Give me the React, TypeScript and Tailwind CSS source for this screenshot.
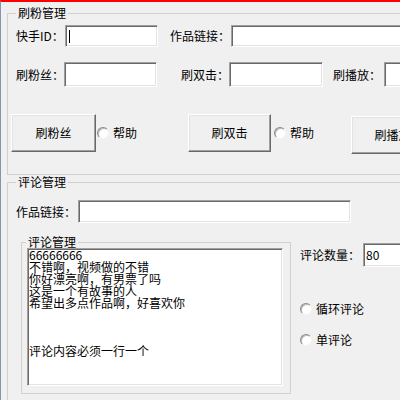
import React from "react";

const sunken =
  "bg-white border border-t-[#a0a0a0] border-l-[#a0a0a0] border-b-white border-r-white shadow-[inset_1px_1px_0_#696969,inset_-1px_-1px_0_#e3e3e3]";

const raised =
  "bg-[#f0f0f0] border border-t-white border-l-white border-b-[#696969] border-r-[#696969] shadow-[inset_-1px_-1px_0_#a0a0a0,inset_1px_1px_0_#e3e3e3] flex items-center justify-center";

const TextBox = ({
  className,
  children,
}: {
  className: string;
  children?: React.ReactNode;
}) => <div className={`${sunken} ${className} flex items-center shrink-0`}>{children}</div>;

const Radio = ({ label, className = "" }: { label: string; className?: string }) => (
  <div className={`flex items-center h-[14px] ${className}`}>
    <div className="w-[12px] h-[12px] rounded-full bg-white border border-t-[#8a8a8a] border-l-[#8a8a8a] border-b-[#f4f4f4] border-r-[#f4f4f4] shadow-[inset_1px_1px_0_#b8b8b8]" />
    <span className="ml-[4px] leading-[14px]">{label}</span>
  </div>
);

const comments = [
  "66666666",
  "不错啊，视频做的不错",
  "你好漂亮啊，有男票了吗",
  "这是一个有故事的人",
  "希望出多点作品啊，好喜欢你",
  "",
  "",
  "",
  "评论内容必须一行一个",
].join("\n");

export default function App() {
  return (
    <div className="w-[400px] h-[400px] overflow-hidden bg-[#f0f0f0] border-t-2 border-t-[#ff0000] border-l border-l-[#8595b0] text-[12px] text-black font-['Liberation_Sans_Narrow','Noto_Sans_CJK_SC',sans-serif]">
      {/* 刷粉管理 */}
      <fieldset className="mt-[4px] ml-[6px] w-[420px] border border-[#d0d0d0] pb-[20px]">
        <legend className="ml-[8px] px-[2px] leading-[14px]">刷粉管理</legend>

        <div className="flex items-center mt-[5px] pl-[8px]">
          <span className="w-[49px] shrink-0">快手ID：</span>
          <TextBox className="w-[93px] h-[22px]">
            <div className="ml-[3px] w-px h-[13px] bg-black" />
          </TextBox>
          <span className="ml-[12px] w-[61px] shrink-0">作品链接：</span>
          <TextBox className="w-[200px] h-[22px]" />
        </div>

        <div className="flex items-center mt-[15px] pl-[8px]">
          <span className="w-[48px] shrink-0">刷粉丝：</span>
          <TextBox className="w-[93px] h-[25px]" />
          <span className="ml-[24px] w-[48px] shrink-0">刷双击：</span>
          <TextBox className="w-[94px] h-[25px]" />
          <span className="ml-[10px] w-[51px] shrink-0">刷播放：</span>
          <TextBox className="w-[60px] h-[25px]" />
        </div>

        <div className="flex items-start mt-[27px] pl-[3px]">
          <button className={`${raised} w-[85px] h-[38px] shrink-0`}>刷粉丝</button>
          <Radio label="帮助" className="ml-px mt-[12px]" />
          <button className={`${raised} ml-[51px] w-[83px] h-[38px] shrink-0`}>刷双击</button>
          <Radio label="帮助" className="ml-[3px] mt-[12px]" />
          <button className={`${raised} ml-[37px] mt-[2px] w-[83px] h-[38px] shrink-0`}>刷播放</button>
        </div>
      </fieldset>

      {/* 评论管理 */}
      <fieldset className="ml-[6px] w-[420px] border border-[#d0d0d0]">
        <legend className="ml-[8px] px-[2px] leading-[14px]">评论管理</legend>

        <div className="flex items-center mt-[11px] pl-[8px]">
          <span className="w-[62px] shrink-0">作品链接：</span>
          <TextBox className="w-[273px] h-[23px]" />
        </div>

        <div className="flex items-start mt-[12px]">
          <fieldset className="ml-[13px] w-[270px] shrink-0 border border-[#d0d0d0] pb-[7px]">
            <legend className="ml-[4px] px-[2px] leading-[14px]">评论管理</legend>
            <textarea
              readOnly
              defaultValue={comments}
              className={`${sunken} block -mt-px ml-[5px] w-[256px] h-[138px] resize-none overflow-hidden pl-px pt-0 leading-[12px] text-[12px] outline-none`}
            />
          </fieldset>

          <div className="ml-[9px] mt-[8px] flex flex-col">
            <div className="flex items-center">
              <span className="w-[63px] shrink-0">评论数量：</span>
              <TextBox className="w-[60px] h-[24px]">
                <span className="ml-[2px]">80</span>
              </TextBox>
            </div>
            <Radio label="循环评论" className="mt-[35px]" />
            <Radio label="单评论" className="mt-[17px]" />
            <div className="mt-[64px] ml-[78px] w-[22px] h-[20px] rounded-[4px] border border-[#b0b0b0]" />
          </div>
        </div>
      </fieldset>
    </div>
  );
}
